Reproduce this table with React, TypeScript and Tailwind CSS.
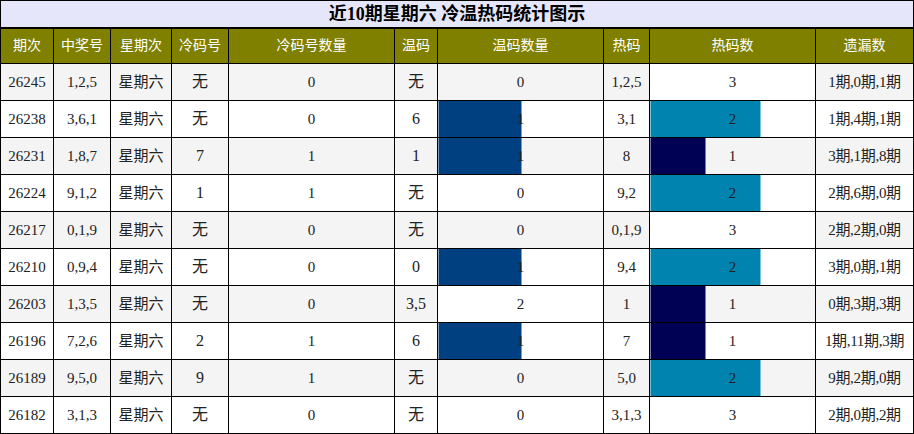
import React from "react";

type Row = {
  qi: string;
  num: string;
  week: string;
  cold: string;
  coldCnt: number;
  warm: string;
  warmCnt: number;
  hot: string;
  hotCnt: number;
  miss: string;
};

const rows: Row[] = [
  { qi: "26245", num: "1,2,5", week: "星期六", cold: "无", coldCnt: 0, warm: "无", warmCnt: 0, hot: "1,2,5", hotCnt: 3, miss: "1期,0期,1期" },
  { qi: "26238", num: "3,6,1", week: "星期六", cold: "无", coldCnt: 0, warm: "6", warmCnt: 1, hot: "3,1", hotCnt: 2, miss: "1期,4期,1期" },
  { qi: "26231", num: "1,8,7", week: "星期六", cold: "7", coldCnt: 1, warm: "1", warmCnt: 1, hot: "8", hotCnt: 1, miss: "3期,1期,8期" },
  { qi: "26224", num: "9,1,2", week: "星期六", cold: "1", coldCnt: 1, warm: "无", warmCnt: 0, hot: "9,2", hotCnt: 2, miss: "2期,6期,0期" },
  { qi: "26217", num: "0,1,9", week: "星期六", cold: "无", coldCnt: 0, warm: "无", warmCnt: 0, hot: "0,1,9", hotCnt: 3, miss: "2期,2期,0期" },
  { qi: "26210", num: "0,9,4", week: "星期六", cold: "无", coldCnt: 0, warm: "0", warmCnt: 1, hot: "9,4", hotCnt: 2, miss: "3期,0期,1期" },
  { qi: "26203", num: "1,3,5", week: "星期六", cold: "无", coldCnt: 0, warm: "3,5", warmCnt: 2, hot: "1", hotCnt: 1, miss: "0期,3期,3期" },
  { qi: "26196", num: "7,2,6", week: "星期六", cold: "2", coldCnt: 1, warm: "6", warmCnt: 1, hot: "7", hotCnt: 1, miss: "1期,11期,3期" },
  { qi: "26189", num: "9,5,0", week: "星期六", cold: "9", coldCnt: 1, warm: "无", warmCnt: 0, hot: "5,0", hotCnt: 2, miss: "9期,2期,0期" },
  { qi: "26182", num: "3,1,3", week: "星期六", cold: "无", coldCnt: 0, warm: "无", warmCnt: 0, hot: "3,1,3", hotCnt: 3, miss: "2期,0期,2期" },
];

// bar colour per value, like the original chart
const warmColors: Record<number, string> = { 1: "#003f80", 2: "#ffffff" };
const hotColors: Record<number, string> = { 1: "#000055", 2: "#0083ae", 3: "#ffffff" };

function barStyle(value: number, max: number, colors: Record<number, string>) {
  if (!value) return undefined;
  const pct = (value / max) * 100;
  const c = colors[value];
  return { background: `linear-gradient(to right, ${c} ${pct}%, transparent ${pct}%)` };
}

const heads = ["期次", "中奖号", "星期次", "冷码号", "冷码号数量", "温码", "温码数量", "热码", "热码数", "遗漏数"];
const widths = ["w-[53px]", "w-[57px]", "w-[61px]", "w-[57px]", "w-[166px]", "w-[43px]", "w-[166px]", "w-[46px]", "w-[166px]", "w-[98px]"];

export default function App() {
  return (
    <div className="w-[914px] h-[434px] bg-white font-['Liberation_Serif','Noto_Sans_CJK_SC',serif]">
      <table className="w-[914px] table-fixed border-collapse text-center">
        <colgroup>
          {widths.map((w, i) => (
            <col key={i} className={w} />
          ))}
        </colgroup>
        <thead>
          <tr className="h-[27px] bg-[#e6e6fa]">
            <th colSpan={10} className="border border-black border-b-2 text-[18px] font-bold text-black leading-none">
              近10期星期六 冷温热码统计图示
            </th>
          </tr>
          <tr className="h-[36px] bg-[#808000]">
            {heads.map((h) => (
              <th key={h} className="border border-black text-[14px] font-normal text-white">
                {h}
              </th>
            ))}
          </tr>
        </thead>
        <tbody className="text-[15px] text-[#222]">
          {rows.map((r, i) => (
            <tr key={r.qi} className={i % 2 === 0 ? "h-[37px] bg-[#f4f4f4]" : "h-[37px] bg-white"}>
              <td className="border border-black">{r.qi}</td>
              <td className="border border-black">{r.num}</td>
              <td className="border border-black">{r.week}</td>
              <td className="border border-black text-[16px]">{r.cold}</td>
              <td className="border border-black">{r.coldCnt}</td>
              <td className="border border-black text-[16px]">{r.warm}</td>
              <td className="border border-black" style={barStyle(r.warmCnt, 2, warmColors)}>
                {r.warmCnt}
              </td>
              <td className="border border-black">{r.hot}</td>
              <td className="border border-black" style={barStyle(r.hotCnt, 3, hotColors)}>
                {r.hotCnt}
              </td>
              <td className="border border-black tracking-[-0.3px]">{r.miss}</td>
            </tr>
          ))}
        </tbody>
      </table>
    </div>
  );
}
